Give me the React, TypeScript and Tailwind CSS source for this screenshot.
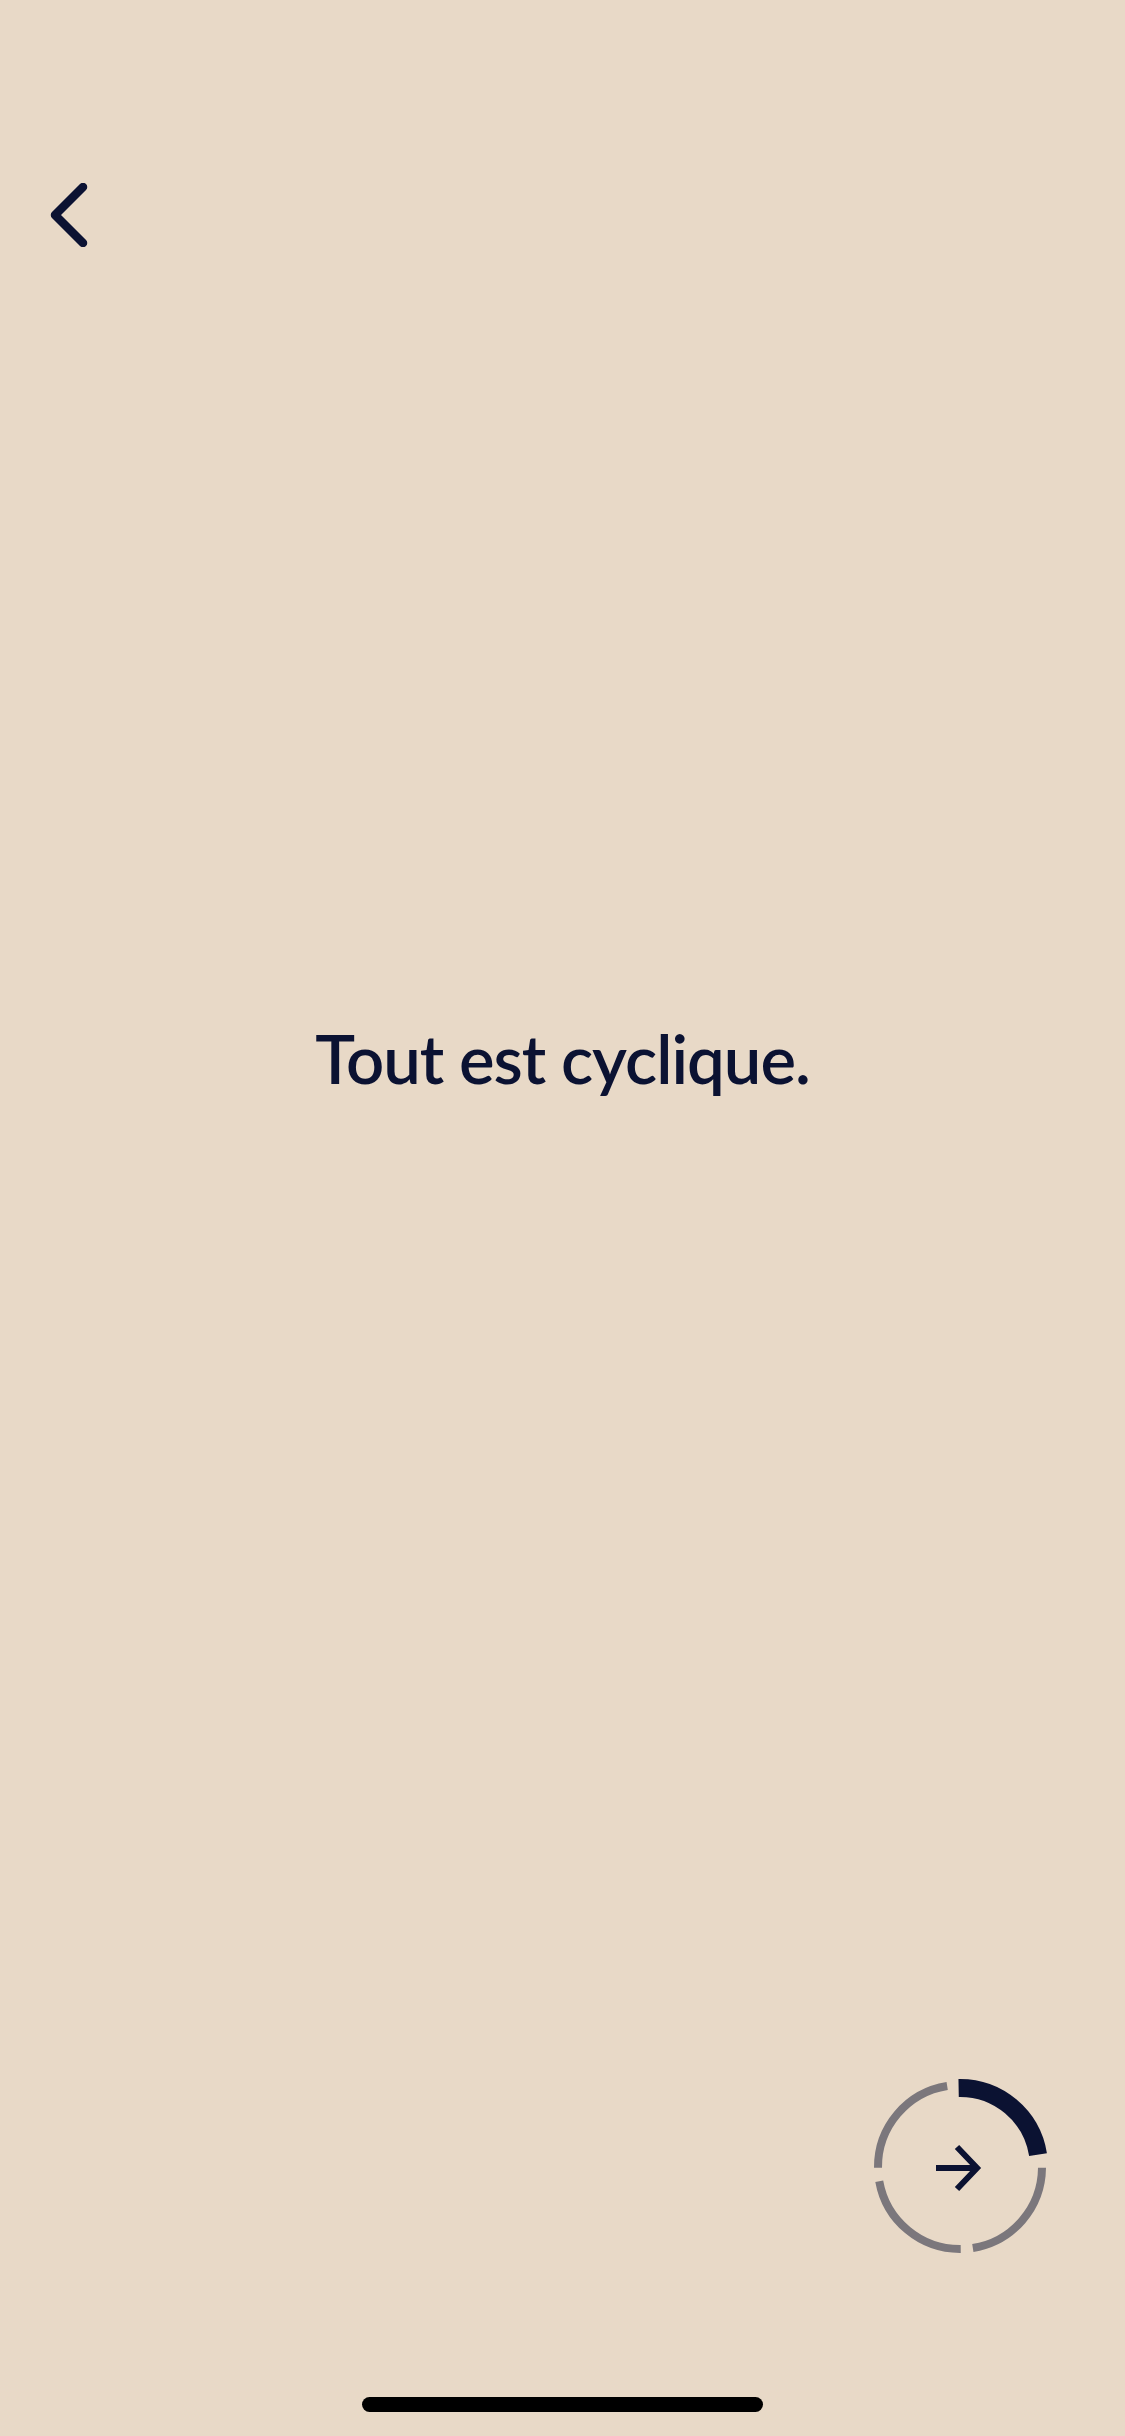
// Onboarding quote screen: back chevron, centred statement, progress "next" button

function BackChevron() {
  return (
    <svg width="40" height="64" viewBox="0 0 40 64" fill="none" aria-hidden>
      <path d="M34 4 L6 32 L34 60" stroke="#0b1232" strokeWidth="8.5" strokeLinecap="round" strokeLinejoin="round" />
    </svg>
  )
}

function NextButton() {
  const gray = '#7b777c'
  const navy = '#0b1232'
  return (
    <button type="button" aria-label="Suivant" className="block h-[200px] w-[200px]">
      <svg width="200" height="200" viewBox="0 0 200 200" fill="none">
        {/* remaining steps */}
        <path d="M182 100.72 A82 82 0 0 1 112.83 180.99" stroke={gray} strokeWidth="8" />
        <path d="M100.72 182 A82 82 0 0 1 19.25 114.24" stroke={gray} strokeWidth="8" />
        <path d="M18 100.72 A82 82 0 0 1 87.17 19.01" stroke={gray} strokeWidth="8" />
        {/* current step */}
        <path d="M98.62 21.01 A79 79 0 0 1 178.03 87.64" stroke={navy} strokeWidth="18" />
        {/* arrow */}
        <path d="M76 101 H115" stroke={navy} strokeWidth="6" />
        <path d="M97 80 L117 101 L97 122" stroke={navy} strokeWidth="6" />
      </svg>
    </button>
  )
}

export default function App() {
  return (
    <div className="flex h-[2436px] w-full flex-col overflow-hidden bg-[#e8d9c7] font-['Lato','Noto_Sans',sans-serif]">
      <header className="pl-[49px] pt-[183px]">
        <button type="button" aria-label="Retour" className="block">
          <BackChevron />
        </button>
      </header>

      <p className="mt-[778px] text-center text-[67px] font-semibold leading-none tracking-[-1px] text-[#0b1232]">
        Tout est cyclique.
      </p>

      <div className="mt-[975px] flex justify-end pr-[65px]">
        <NextButton />
      </div>

      <div className="mx-auto mt-[130px] h-[15px] w-[401px] rounded-full bg-black" />
    </div>
  )
}
